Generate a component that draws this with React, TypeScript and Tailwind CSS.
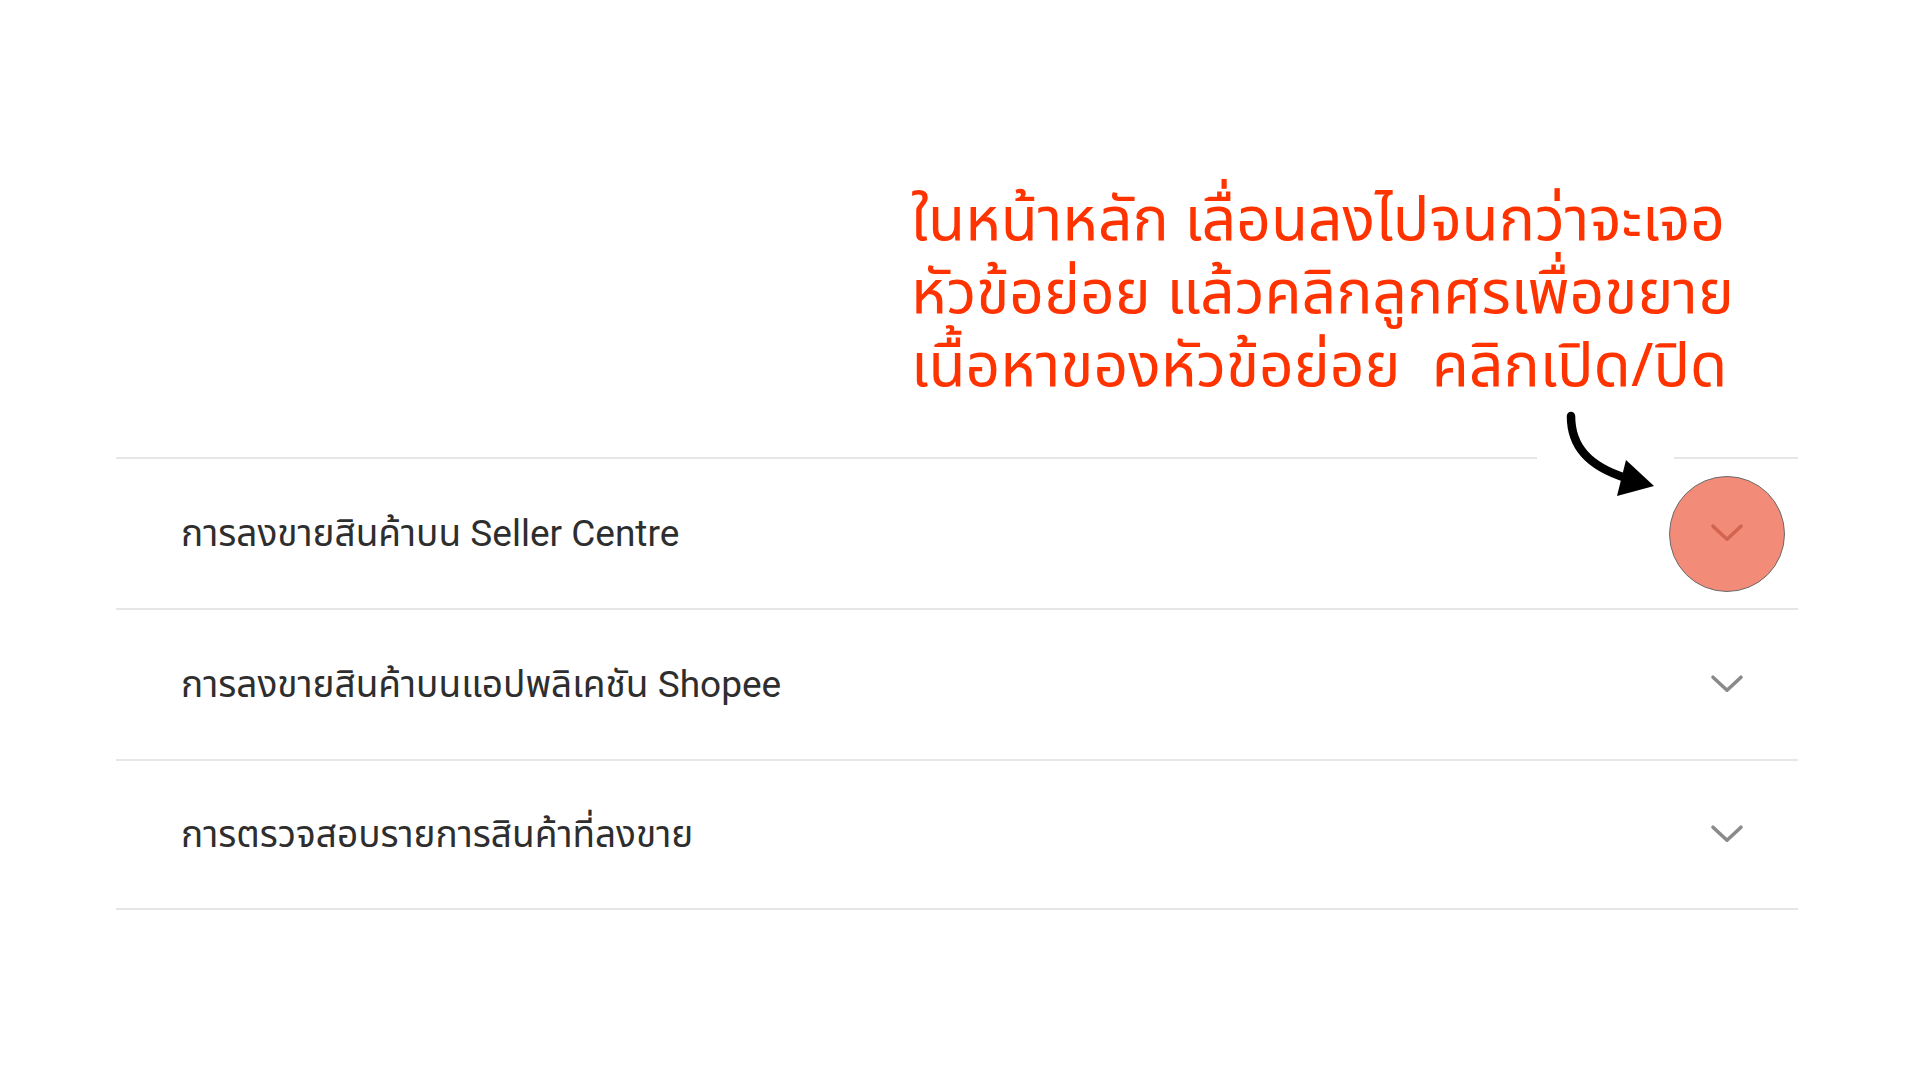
import React from "react";

const rows = [
  "การลงขายสินค้าบน Seller Centre",
  "การลงขายสินค้าบนแอปพลิเคชัน Shopee",
  "การตรวจสอบรายการสินค้าที่ลงขาย",
];

function Chevron({ color, width = 34 }: { color: string; width?: number }) {
  return (
    <svg width={width} height={width * 0.6} viewBox="0 0 34 20" fill="none">
      <path d="M3 3 L17 16 L31 3" stroke={color} strokeWidth="3.6" strokeLinecap="round" strokeLinejoin="round" />
    </svg>
  );
}

export default function App() {
  return (
    <div
      className="relative w-[1920px] h-[1080px] bg-white overflow-hidden"
      style={{ fontFamily: "Roboto, 'Noto Sans', 'Noto Sans Thai', sans-serif" }}
    >
      <div className="h-[457px] pl-[911px] pt-[180px]">
        <div className="text-[#ff3300] text-[60.5px] leading-[73px] whitespace-nowrap" style={{ fontFamily: "'Noto Sans', 'Noto Sans Thai', sans-serif" }}>
          <div>ในหน้าหลัก เลื่อนลงไปจนกว่าจะเจอ</div>
          <div>หัวข้อย่อย แล้วคลิกลูกศรเพื่อขยาย</div>
          <div>เนื้อหาของหัวข้อย่อย&nbsp; คลิกเปิด/ปิด</div>
        </div>
      </div>

      <div className="ml-[116px] w-[1682px]">
        {rows.map((r, i) => (
          <div
            key={i}
            className="h-[151px] border-t-2 border-[#e6e6e6] flex items-center justify-between pl-[65px] pr-[54px] last:border-b-2"
          >
            <span className="text-[37px] text-[#2e2e2e]">{r}</span>
            {i === 0 ? (
              <div className="w-[116px] h-[116px] -mr-[41px] rounded-full bg-[#f28c79] border border-[#6b6b6b] flex items-center justify-center">
                <Chevron color="#d2654f" />
              </div>
            ) : (
              <Chevron color="#8a8a8a" />
            )}
          </div>
        ))}
      </div>

      {/* annotation arrow overlay */}
      <svg className="absolute left-0 top-0" width="1920" height="1080" viewBox="0 0 1920 1080">
        <rect x="1537" y="450" width="137" height="12" fill="#ffffff" />
        <path d="M1571 416 C1571 446 1588 466 1626 478" stroke="#000" strokeWidth="8.5" fill="none" strokeLinecap="round" />
        <polygon points="1626,460 1654,486 1617,496" fill="#000" />
      </svg>
    </div>
  );
}
